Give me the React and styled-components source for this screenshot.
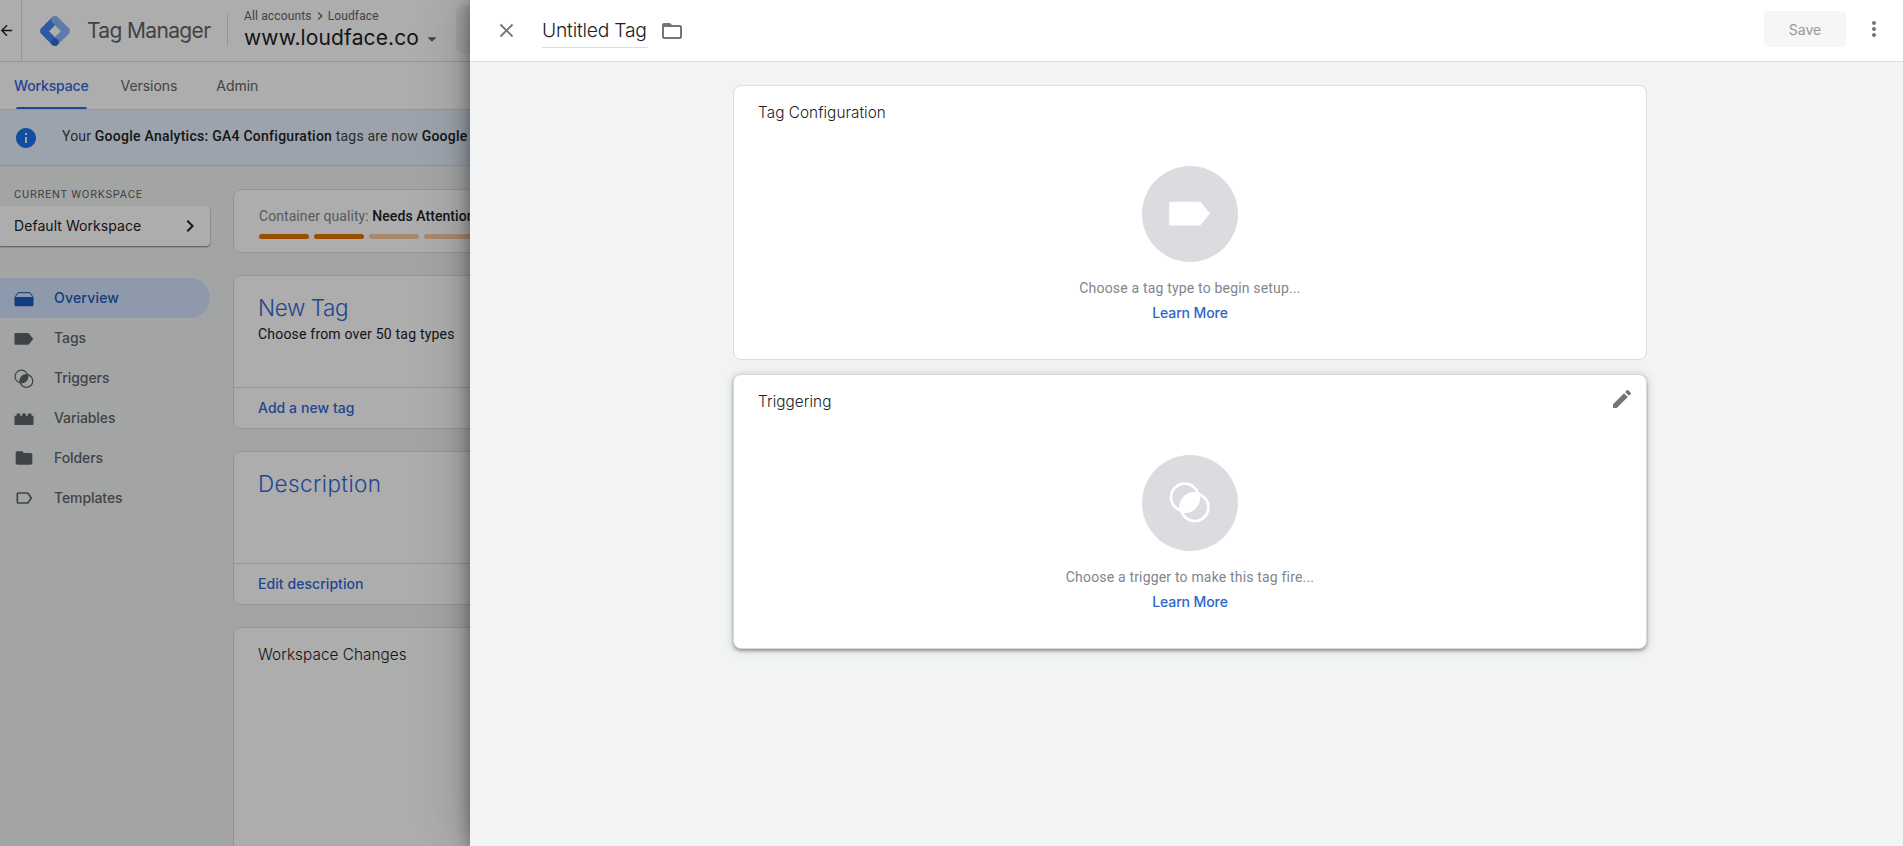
import React from 'react'
import styled, {createGlobalStyle} from 'styled-components'
import {
    MdArrowBack,
    MdArrowDropDown,
    MdChevronRight,
    MdClose,
    MdEdit,
    MdFolder,
    MdFolderOpen,
    MdInfo,
    MdLabelOutline,
    MdMoreVert,
} from 'react-icons/md'

// style

const google = `'Google Sans', Inter, Arial, sans-serif`
const border = '#dadce0'
const blue = '#3367d6'
const grey = '#5f6368'

const GlobalStyle = createGlobalStyle`
    * {
        box-sizing: border-box;
    }
    body {
        margin: 0;
        overflow: hidden;
        font-family: Roboto, Arial, sans-serif;
        font-size: 14px;
        color: #202124;
    }
    svg {
        display: block;
        flex-shrink: 0;
    }
`

const Wrapper = styled.div`
    position: relative;
    width: 100%;
    height: 100vh;
    overflow: hidden;
`

const Page = styled.div`
    display: flex;
    flex-direction: column;
    height: 100%;
    background: #f1f3f4;
    white-space: nowrap;
`

const Header = styled.header`
    display: flex;
    height: 62px;
    flex-shrink: 0;
    background: #fff;
    border-bottom: 1px solid ${border};
`

const Back = styled.div`
    display: flex;
    align-items: center;
    width: 22px;
    border-right: 1px solid ${border};
    svg {
        margin-left: -2px;
    }
`

const Brand = styled.div`
    display: flex;
    align-items: center;
    width: 205px;
    padding-left: 18px;
    gap: 17px;
`

const Product = styled.div`
    font-family: ${google};
    font-size: 21px;
    letter-spacing: -0.65px;
    color: ${grey};
`

const Divider = styled.div`
    width: 1px;
    height: 32px;
    margin-top: 14px;
    background: ${border};
`

const Account = styled.div`
    width: 228px;
    padding: 8px 0 0 16px;
`

const Crumbs = styled.div`
    display: flex;
    align-items: center;
    height: 16px;
    font-size: 12px;
    letter-spacing: 0.14px;
    color: ${grey};
`

const ContainerName = styled.div`
    display: flex;
    align-items: center;
    height: 27px;
    font-family: ${google};
    font-size: 21px;
    letter-spacing: 0.13px;
    svg {
        margin: 2px 0 0 2px;
        color: ${grey};
    }
`

const Search = styled.div`
    flex: 1;
    height: 48px;
    margin-top: 6px;
    border-radius: 8px;
    background: #f1f3f4;
`

const Tabs = styled.nav`
    display: flex;
    height: 48px;
    flex-shrink: 0;
    padding-left: 14px;
    background: #fff;
    border-bottom: 1px solid ${border};
`

const Tab = styled.div`
    display: grid;
    align-content: center;
    position: relative;
    margin-right: ${props => props.$active ? 32 : 39}px;
    font-family: ${google};
    font-weight: ${props => props.$active ? 500 : 400};
    letter-spacing: ${props => props.$active ? '-0.15px' : '-0.05px'};
    color: ${props => props.$active ? blue : grey};

    &::after {
        content: '';
        display: ${props => props.$active ? 'block' : 'none'};
        position: absolute;
        left: 2px;
        right: 2px;
        bottom: 0;
        height: 2px;
        border-radius: 2px 2px 0 0;
        background: ${blue};
    }
`

const Banner = styled.div`
    display: flex;
    align-items: center;
    height: 56px;
    flex-shrink: 0;
    padding-left: 14px;
    gap: 24px;
    background: #e8f0fe;
    border-bottom: 1px solid #d2dbea;
    letter-spacing: 0.17px;
    color: #3c4043;
    svg {
        color: #1a73e8;
    }
`

const BannerText = styled.p`
    margin: 0 0 3px;
    b {
        font-weight: 500;
        letter-spacing: 0.26px;
        color: #202124;
    }
`

const Body = styled.div`
    display: flex;
    flex: 1;
    min-height: 0;
    gap: 22px;
`

const Sidebar = styled.aside`
    width: 211px;
    flex-shrink: 0;
    padding-top: 21px;
`

const Label = styled.div`
    padding-left: 14px;
    font-size: 11px;
    line-height: 16px;
    letter-spacing: 0.8px;
    color: ${grey};
`

const Picker = styled.div`
    display: flex;
    align-items: center;
    justify-content: space-between;
    width: 210px;
    height: 40px;
    margin-top: 3px;
    padding: 0 8px 1px 14px;
    border-radius: 0 4px 4px 0;
    background: #fff;
    box-shadow: 0 1px 2px rgba(0,0,0,0.5);
    font-family: ${google};
    letter-spacing: 0.06px;
`

const Nav = styled.nav`
    margin-top: 32px;
`

const NavItem = styled.div`
    display: flex;
    align-items: center;
    width: 210px;
    height: 40px;
    padding-left: 14px;
    gap: 20px;
    border-radius: 0 20px 20px 0;
    background: ${props => props.$active ? '#d2e3fc' : 'transparent'};
    color: ${props => props.$active ? '#185abc' : grey};
    font-family: ${google};
    font-weight: 500;
    letter-spacing: ${props => props.$active ? '0.2px' : '-0.08px'};
`

const NavLabel = styled.span`
    margin-bottom: 1px;
`

const Main = styled.main`
    flex: 1;
    display: flex;
    flex-direction: column;
    gap: 22px;
    padding-top: 23px;
`

const Card = styled.section`
    display: flex;
    flex-direction: column;
    flex-shrink: 0;
    height: ${props => props.$tall ? 300 : 154}px;
    padding-top: 15px;
    border: 1px solid ${border};
    border-radius: 8px;
    background: #fff;
`

const Quality = styled(Card)`
    height: 64px;
    padding: 16px 0 0 25px;
`

const QualityText = styled.div`
    line-height: 20px;
    color: #80868b;
    letter-spacing: 0.07px;
    span {
        font-weight: 500;
        color: #202124;
    }
`

const Bars = styled.div`
    display: flex;
    gap: 5px;
    margin-top: 8px;
`

const Bar = styled.div`
    width: 50px;
    height: 5px;
    border-radius: 3px;
    background: ${props => props.$filled ? '#e37400' : '#f8caa2'};
`

const CardTitle = styled.h2`
    margin: 0;
    padding-left: 24px;
    font-family: ${google};
    font-size: 22.5px;
    font-weight: 300;
    line-height: 34px;
    letter-spacing: ${props => props.$spacing}px;
    color: ${blue};
`

const CardText = styled.div`
    margin-top: -1px;
    padding-left: 24px;
    line-height: 20px;
    letter-spacing: 0.2px;
`

const CardAction = styled.div`
    display: grid;
    align-content: center;
    height: 41px;
    margin-top: auto;
    padding: 0 0 2px 24px;
    border-top: 1px solid ${border};
    font-family: ${google};
    font-weight: 500;
    letter-spacing: 0.06px;
    color: ${blue};
`

const CardHeading = styled.div`
    padding-left: 24px;
    font-family: ${google};
    font-size: 15.3px;
    font-weight: 300;
    line-height: 24px;
    letter-spacing: 0.06px;
`

const Scrim = styled.div`
    position: absolute;
    inset: 0;
    background: rgba(0,0,0,0.32);
`

const Panel = styled.div`
    position: absolute;
    top: 0;
    right: 0;
    bottom: 0;
    left: 470px;
    background: #f1f3f4;
    box-shadow: 0 0 16px rgba(0,0,0,0.4), 0 0 50px rgba(0,0,0,0.25);
`

const PanelHeader = styled.header`
    display: flex;
    align-items: center;
    height: 62px;
    padding: 0 17px 0 25px;
    background: #fff;
    border-bottom: 1px solid ${border};
    color: #757575;
`

const Close = styled.div`
    width: 47px;
`

const PanelTitle = styled.div`
    width: 106px;
    height: 35px;
    margin-right: 12px;
    border-bottom: 1px solid ${border};
    font-family: ${google};
    font-size: 19.3px;
    font-weight: 300;
    line-height: 34px;
    letter-spacing: -0.22px;
    white-space: nowrap;
    color: #202124;
`

const Save = styled.div`
    display: grid;
    place-content: center;
    width: 82px;
    height: 36px;
    margin: 0 16px 3px auto;
    border-radius: 4px;
    background: #f6f6f6;
    font-family: ${google};
    letter-spacing: 0.05px;
    color: #999;
`

const More = styled.div`
    margin-bottom: 3px;
`

const Sections = styled.div`
    display: grid;
    gap: 14px;
    padding: 23px 256px 0 263px;
`

const SectionCard = styled.section`
    display: flex;
    flex-direction: column;
    align-items: center;
    height: 275px;
    border: 1px solid ${props => props.$raised ? '#d5d7da' : border};
    border-radius: 8px;
    background: #fff;
    box-shadow: ${props => props.$raised ? '0 2px 3px rgba(60,64,67,0.4), 0 1px 8px rgba(60,64,67,0.25)' : 'none'};
`

const SectionHead = styled.div`
    display: flex;
    justify-content: space-between;
    width: 100%;
    height: 39px;
    padding: 15px 12px 0 24px;
    font-family: ${google};
    font-size: 15.3px;
    font-weight: 300;
    line-height: 24px;
    letter-spacing: 0.06px;
    svg {
        margin-top: -3px;
        color: #757575;
    }
`

const Circle = styled.div`
    width: 96px;
    height: 96px;
    margin-top: 41px;
    border-radius: 50%;
    background: ${border};
`

const Hint = styled.div`
    margin-top: 16px;
    line-height: 21px;
    letter-spacing: 0.18px;
    color: #80868b;
`

const LearnMore = styled.div`
    margin-top: 4px;
    font-family: ${google};
    font-weight: 500;
    line-height: 20px;
    letter-spacing: -0.1px;
    color: #2c66c9;
`



// icons

const Logo = () => (
    <svg width="30" height="30" viewBox="0 0 2469.7 2469.8">
        <path fill="#8ab4f8" d="M1449.8 2376L1021 1946.7l921.1-930.5 436.7 436.6z" />
        <path fill="#4285f4" d="M1452.9 527.1L1016.3 90.4 90.5 1016.2c-120.6 120.5-120.7 315.8-.2 436.4l.2.2 925.8 925.8 428.4-393.1-698.4-730.3z" />
        <path fill="#8ab4f8" d="M2378.7 1016.2L1452.9 90.4c-120.6-120.6-316.1-120.6-436.6 0-120.6 120.6-120.6 316.1 0 436.6l926.3 925.8c120.6 120.6 316.1 120.6 436.6 0 120.6-120.6 120.6-316.1-.5-436.6z" />
        <circle fill="#246fdb" cx="1231.2" cy="2163.9" r="306" />
    </svg>
)

const OverviewIcon = () => (
    <svg width="20" height="20" viewBox="0 0 20 20" fill="currentColor">
        <path d="M.5 9h19v8a1.2 1.2 0 0 1-1.2 1.2H1.7A1.2 1.2 0 0 1 .5 17z" />
        <path d="M1.2 8.8L4 4.7h12l2.8 4.1" fill="none" stroke="currentColor" />
    </svg>
)

const TagIcon = () => (
    <svg width="20" height="20" viewBox="0 0 20 20" fill="currentColor">
        <path d="M1.5 5h12.3c.5 0 .8.2 1.1.5L19.3 11l-4.4 5.3c-.3.3-.6.5-1.1.5H1.5c-.6 0-1-.4-1-1V6c0-.6.4-1 1-1z" />
    </svg>
)

const TriggerIcon = () => (
    <svg width="20" height="20" viewBox="0 0 20 20" fill="none" stroke="currentColor" strokeWidth="1.2">
        <circle cx="7.4" cy="8.6" r="6.4" />
        <circle cx="12.4" cy="13" r="6.4" />
        <path fill="currentColor" d="M13.8 7.6A6.4 6.4 0 0 1 6 14A6.4 6.4 0 0 1 13.800 7.600z" />
    </svg>
)

const VariableIcon = () => (
    <svg width="20" height="20" viewBox="0 0 20 20" fill="currentColor">
        <path d="M.5 7.800h2V6.500c0-.5.400-1 1-1h1.700c.6 0 1 .5 1 1v1.300h2V6.500c0-.5.400-1 1-1h1.700c.6 0 1 .5 1 1v1.300h2V6.500c0-.5.400-1 1-1h1.700c.6 0 1 .5 1 1v1.300h1.900V16c0 .6-.4 1-1 1H1.500c-.6 0-1-.4-1-1z" />
    </svg>
)

const BigTagIcon = () => (
    <svg width="96" height="96" viewBox="0 0 96 96">
        <path fill="#fff" d="M28.300 35.700h29.500a1 1 0 0 1 .8.400L68 47.600l-9.400 11.500a1 1 0 0 1-.8.400H28.300a1 1 0 0 1-1-1V36.700a1 1 0 0 1 1-1z" />
    </svg>
)

const BigTriggerIcon = () => (
    <svg width="96" height="96" viewBox="0 0 96 96" fill="none" stroke="#fff" strokeWidth="2.7">
        <circle cx="42.7" cy="42.3" r="13.7" />
        <circle cx="52.7" cy="52.3" r="13.7" />
        <path fill="#fff" d="M56.2 38.9A13.7 13.7 0 0 1 39.2 55.9A13.7 13.7 0 0 1 56.2 38.900z" />
    </svg>
)

const navItems = [
    {label: 'Overview', icon: <OverviewIcon />, active: true},
    {label: 'Tags', icon: <TagIcon />},
    {label: 'Triggers', icon: <TriggerIcon />},
    {label: 'Variables', icon: <VariableIcon />},
    {label: 'Folders', icon: <MdFolder size={20} />},
    {label: 'Templates', icon: <MdLabelOutline size={20} />},
]

const Workspace = () => (
    <Page>
        <Header>
            <Back><MdArrowBack size={17} /></Back>
            <Brand>
                <Logo />
                <Product>Tag Manager</Product>
            </Brand>
            <Divider />
            <Account>
                <Crumbs>
                    All accounts
                    <MdChevronRight size={16} />
                    Loudface
                </Crumbs>
                <ContainerName>
                    www.loudface.co
                    <MdArrowDropDown size={22} />
                </ContainerName>
            </Account>
            <Search />
        </Header>
        <Tabs>
            <Tab $active>Workspace</Tab>
            <Tab>Versions</Tab>
            <Tab>Admin</Tab>
        </Tabs>
        <Banner>
            <MdInfo size={24} />
            <BannerText>Your <b>Google Analytics: GA4 Configuration</b> tags are now <b>Google tags</b>.</BannerText>
        </Banner>
        <Body>
            <Sidebar>
                <Label>CURRENT WORKSPACE</Label>
                <Picker>
                    Default Workspace
                    <MdChevronRight size={24} />
                </Picker>
                <Nav>
                    {navItems.map((item) => (
                        <NavItem key={item.label} $active={item.active}>
                            {item.icon}
                            <NavLabel>{item.label}</NavLabel>
                        </NavItem>
                    ))}
                </Nav>
            </Sidebar>
            <Main>
                <Quality>
                    <QualityText>Container quality: <span>Needs Attention</span></QualityText>
                    <Bars>
                        <Bar $filled />
                        <Bar $filled />
                        <Bar />
                        <Bar />
                    </Bars>
                </Quality>
                <Card>
                    <CardTitle $spacing={-0.4}>New Tag</CardTitle>
                    <CardText>Choose from over 50 tag types</CardText>
                    <CardAction>Add a new tag</CardAction>
                </Card>
                <Card>
                    <CardTitle $spacing={0.4}>Description</CardTitle>
                    <CardAction>Edit description</CardAction>
                </Card>
                <Card $tall>
                    <CardHeading>Workspace Changes</CardHeading>
                </Card>
            </Main>
        </Body>
    </Page>
)

const Section = (props) => (
    <SectionCard $raised={props.raised}>
        <SectionHead>
            {props.title}
            {props.raised && <MdEdit size={24} />}
        </SectionHead>
        <Circle>{props.icon}</Circle>
        <Hint>{props.hint}</Hint>
        <LearnMore>Learn More</LearnMore>
    </SectionCard>
)

const App = () => {
  return (
    <Wrapper>
        <GlobalStyle />
        <Workspace />
        <Scrim />
        <Panel>
            <PanelHeader>
                <Close><MdClose size={23} /></Close>
                <PanelTitle>Untitled Tag</PanelTitle>
                <MdFolderOpen size={24} />
                <Save>Save</Save>
                <More><MdMoreVert size={24} /></More>
            </PanelHeader>
            <Sections>
                <Section title="Tag Configuration" icon={<BigTagIcon />} hint="Choose a tag type to begin setup..." />
                <Section title="Triggering" icon={<BigTriggerIcon />} hint="Choose a trigger to make this tag fire..." raised />
            </Sections>
        </Panel>
    </Wrapper>
  )
}

export default App
